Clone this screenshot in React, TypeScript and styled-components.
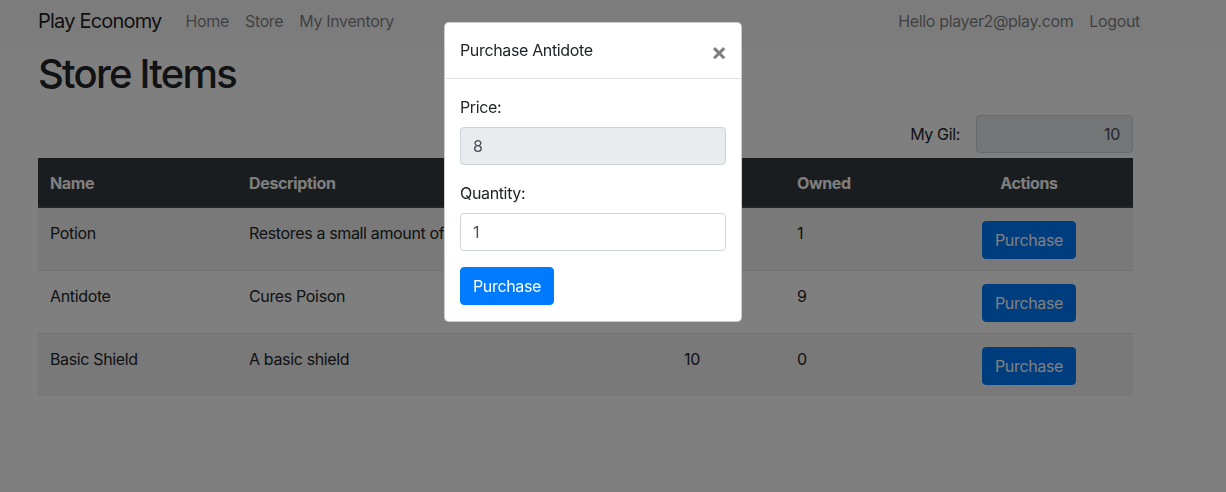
import React from "react";
import styled, { createGlobalStyle } from "styled-components";

const Global = createGlobalStyle`
  html, body { margin: 0; padding: 0; background: #fff; }
  body {
    font-family: Inter, "Noto Sans", "Liberation Sans", sans-serif;
    font-size: 16px;
    line-height: 1.5;
    color: #212529;
    letter-spacing: -0.35px;
  }
  * { box-sizing: border-box; }
`;

const Navbar = styled.nav`
  height: 49px;
  padding-bottom: 7px;
  background: #f8f9fa;
  display: flex;
  align-items: center;
`;

const NavInner = styled.div`
  margin-left: 38px;
  width: 1110px;
  display: flex;
  align-items: center;
`;

const Brand = styled.a`
  font-size: 20px;
  line-height: 30px;
  letter-spacing: -0.8px;
  color: rgba(0, 0, 0, 0.9);
  margin-right: 16px;
  text-decoration: none;
`;

const NavList = styled.div<{ $right?: boolean }>`
  display: flex;
  align-items: center;
  margin-left: ${(p) => (p.$right ? "auto" : "0")};
`;

const NavLink = styled.a`
  padding: 0 8px;
  color: rgba(0, 0, 0, 0.5);
  text-decoration: none;
  line-height: 24px;
`;

const Container = styled.main`
  margin-left: 38px;
  width: 1095px;
`;

const Title = styled.h1`
  font-size: 40px;
  font-weight: 500;
  line-height: 48px;
  margin: 1px 0 0;
  letter-spacing: -1.75px;
`;

const GilRow = styled.div`
  display: flex;
  justify-content: flex-end;
  align-items: center;
  gap: 16px;
  margin-top: 17px;
  margin-bottom: 5px;
`;

const Label = styled.label`
  display: block;
  line-height: 24px;
`;

const Input = styled.div<{ $readonly?: boolean; $align?: string; $width?: string }>`
  height: 38px;
  width: ${(p) => p.$width || "100%"};
  padding: 6px 12px;
  border: 1px solid #ced4da;
  border-radius: 4px;
  background: ${(p) => (p.$readonly ? "#e9ecef" : "#fff")};
  color: #495057;
  text-align: ${(p) => p.$align || "left"};
  line-height: 24px;
`;

const Table = styled.table`
  width: 1095px;
  border-collapse: collapse;
  table-layout: fixed;
`;

const Th = styled.th<{ $center?: boolean; $w: number }>`
  width: ${(p) => p.$w}px;
  background: #343a40;
  color: #fff;
  font-weight: 700;
  text-align: ${(p) => (p.$center ? "center" : "left")};
  padding: 13px 12px 11px;
  line-height: 24px;
  border-bottom: 2px solid #454d55;
`;

const Tr = styled.tr<{ $odd?: boolean }>`
  background: ${(p) => (p.$odd ? "rgba(0,0,0,0.05)" : "transparent")};
  border-top: 1px solid #dee2e6;
`;

const Td = styled.td<{ $center?: boolean }>`
  padding: 13px 12px 11px;
  vertical-align: top;
  line-height: 24px;
  text-align: ${(p) => (p.$center ? "center" : "left")};
  white-space: nowrap;
  overflow: hidden;
`;

const Button = styled.button`
  height: 38px;
  padding: 6px 12px;
  background: #007bff;
  color: #fff;
  border: 1px solid #007bff;
  border-radius: 4px;
  font-family: inherit;
  font-size: 16px;
  letter-spacing: -0.35px;
  line-height: 24px;
`;

const Backdrop = styled.div`
  position: fixed;
  inset: 0;
  background: rgba(0, 0, 0, 0.5);
`;

const ModalLayer = styled.div`
  position: fixed;
  inset: 0;
`;

const Dialog = styled.div`
  margin: 22px 0 0 444px;
  width: 298px;
  background: #fff;
  border: 1px solid rgba(0, 0, 0, 0.2);
  border-radius: 5px;
`;

const ModalHeader = styled.div`
  display: flex;
  align-items: center;
  justify-content: space-between;
  height: 56px;
  padding: 0 16px 1px 15px;
  border-bottom: 1px solid #dee2e6;
`;

const ModalTitle = styled.div`
  line-height: 24px;
`;

const Close = styled.span`
  font-size: 24px;
  font-weight: 700;
  line-height: 24px;
  color: #000;
  opacity: 0.5;
  margin-right: -2px;
  margin-top: 3px;
`;

const ModalBody = styled.div`
  padding: 16px 15px 16px 15px;
`;

const FormGroup = styled.div`
  margin-bottom: 16px;
  display: flex;
  flex-direction: column;
  gap: 8px;
`;

const items = [
  { name: "Potion", desc: "Restores a small amount of HP", price: 5, owned: 1 },
  { name: "Antidote", desc: "Cures Poison", price: 8, owned: 9 },
  { name: "Basic Shield", desc: "A basic shield", price: 10, owned: 0 },
];

export default function App() {
  return (
    <>
      <Global />
      <Navbar>
        <NavInner>
          <Brand>Play Economy</Brand>
          <NavList>
            <NavLink>Home</NavLink>
            <NavLink>Store</NavLink>
            <NavLink>My Inventory</NavLink>
          </NavList>
          <NavList $right>
            <NavLink>Hello player2@play.com</NavLink>
            <NavLink>Logout</NavLink>
          </NavList>
        </NavInner>
      </Navbar>
      <Container>
        <Title>Store Items</Title>
        <GilRow>
          <Label>My Gil:</Label>
          <Input $readonly $align="right" $width="157px">10</Input>
        </GilRow>
        <Table>
          <thead>
            <tr>
              <Th $w={199}>Name</Th>
              <Th $w={435}>Description</Th>
              <Th $w={113}>Price</Th>
              <Th $w={140}>Owned</Th>
              <Th $w={208} $center>Actions</Th>
            </tr>
          </thead>
          <tbody>
            {items.map((it, i) => (
              <Tr key={it.name} $odd={i % 2 === 0}>
                <Td>{it.name}</Td>
                <Td>{it.desc}</Td>
                <Td>{it.price}</Td>
                <Td>{it.owned}</Td>
                <Td $center>
                  <Button>Purchase</Button>
                </Td>
              </Tr>
            ))}
          </tbody>
        </Table>
      </Container>
      <Backdrop />
      <ModalLayer>
        <Dialog>
          <ModalHeader>
            <ModalTitle>Purchase Antidote</ModalTitle>
            <Close>×</Close>
          </ModalHeader>
          <ModalBody>
            <FormGroup>
              <Label>Price:</Label>
              <Input $readonly>8</Input>
            </FormGroup>
            <FormGroup>
              <Label>Quantity:</Label>
              <Input>1</Input>
            </FormGroup>
            <Button>Purchase</Button>
          </ModalBody>
        </Dialog>
      </ModalLayer>
    </>
  );
}
